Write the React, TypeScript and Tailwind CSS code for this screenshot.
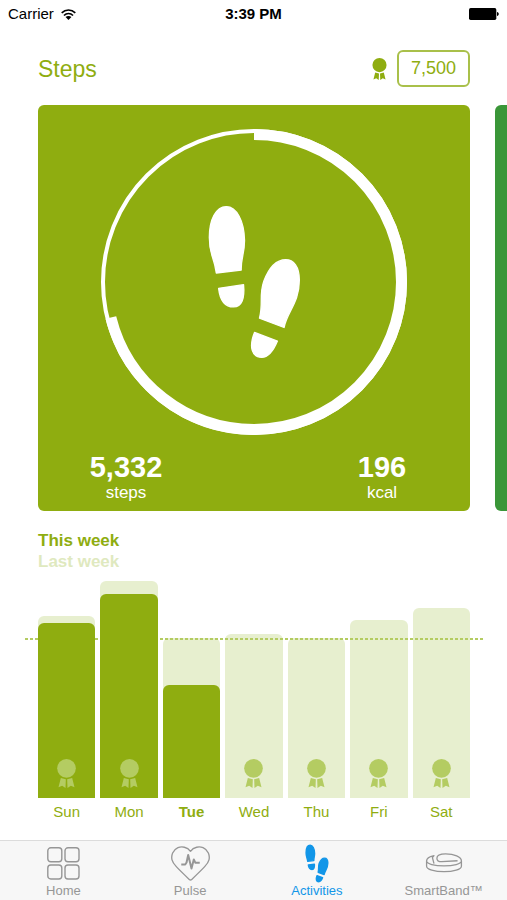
import React from "react";

type IconProps = { className?: string };

function Footprints({ className, weight = 4 }: IconProps & { weight?: number }) {
  return (
    <svg viewBox="38 31 280 462" className={className} fill="currentColor" stroke="currentColor" strokeWidth={weight} strokeLinejoin="round" overflow="visible" aria-hidden="true">
      <path d="M63 235 L138 226 C137 188 148 178 148 137 C147 78 124 35 93 35 C62 35 42 74 42 128 C42 184 55 178 63 235Z" />
      <path d="M70 281 L145 270 C149 312 140 337 115 337 C88 337 74 316 70 281Z" />
      <path d="M193 371 L267 399 C276 351 313 326 313 256 C313 216 296 195 272 195 C240 195 218 228 206 260 C191 304 205 324 193 371Z" />
      <path d="M178 414 L247 440 C233 474 219 489 200 489 C169 489 161 456 178 414Z" />
    </svg>
  );
}

function Medal({ className }: IconProps) {
  return (
    <svg viewBox="0 0 56 87" className={className} fill="currentColor" aria-hidden="true">
      <circle cx="28" cy="28" r="28" />
      <path d="M11 57 L26 61 L25 87 L15 80 L4 85Z" />
      <path d="M45 57 L30 61 L31 87 L41 80 L52 85Z" />
    </svg>
  );
}

function Wifi({ className }: IconProps) {
  return (
    <svg viewBox="0 0 46 34" className={className} fill="none" stroke="currentColor" strokeWidth="5" aria-hidden="true">
      <path d="M2 12 C14 0 32 0 44 12" />
      <path d="M9 20 C17 12 29 12 37 20" />
      <path d="M14 25 C19 20 27 20 32 25 L23 34Z" fill="currentColor" stroke="none" />
    </svg>
  );
}

function Battery({ className }: IconProps) {
  return (
    <svg viewBox="0 0 90 36" className={className} fill="currentColor" aria-hidden="true">
      <rect x="0" y="0" width="82" height="36" rx="5" />
      <path d="M84 12 C91 13 91 23 84 24Z" />
    </svg>
  );
}

function HomeIcon() {
  return (
    <svg viewBox="0 0 33 33" className="size-[33px]" fill="none" stroke="currentColor" strokeWidth="1.4" aria-hidden="true">
      <rect x="0.8" y="0.8" width="14" height="14" rx="3" />
      <rect x="18" y="0.8" width="14" height="14" rx="3" />
      <rect x="0.8" y="18" width="14" height="14" rx="3" />
      <rect x="18" y="18" width="14" height="14" rx="3" />
    </svg>
  );
}

function PulseIcon() {
  return (
    <svg viewBox="0 0 118 106" className="h-[35px] w-[39px]" fill="none" stroke="currentColor" strokeWidth="4" strokeLinejoin="round" aria-hidden="true">
      <path d="M59 16 C49 2 32 1 21 5 C5 12 0 29 3 42 C6 54 17 65 56 102 Q59 104 62 102 C101 65 112 54 115 42 C118 29 113 12 97 5 C86 1 69 2 59 16Z" />
      <path d="M31 56 H43 L47 50 L52 27 L62 68 L69 41 L74 51 H87" strokeWidth="6" />
    </svg>
  );
}

function BandIcon() {
  return (
    <svg viewBox="0 0 114 62" className="h-[20px] w-[38px]" fill="none" stroke="currentColor" strokeWidth="4" strokeLinejoin="round" aria-hidden="true">
      <path d="M3 25 C3 34 28 40 57 40 C86 40 111 34 111 25 V41 C111 51 86 58 57 58 C28 58 3 51 3 41Z" />
      <path d="M3 25 C3 17 11 11 26 8 L21 14 L26 33" />
      <path d="M111 25 C111 11 88 3 62 3 C44 3 35 8 35 16 C35 23 41 27 50 27 L99 24" />
    </svg>
  );
}

const GOAL = 7500;
const STEPS = 5332;

function ProgressRing() {
  const radius = 147.5;
  const length = 2 * Math.PI * radius;
  return (
    <div className="relative mx-auto size-[306px]">
      <svg viewBox="0 0 306 306" className="size-full -rotate-90" fill="none" stroke="white" role="img" aria-label="Progress towards goal">
        <circle cx="153" cy="153" r="151" strokeWidth="4" />
        <circle cx="153" cy="153" r={radius} strokeWidth="11" strokeDasharray={`${(length * STEPS) / GOAL} ${length}`} />
      </svg>
      <div className="absolute inset-0 flex items-center justify-center text-white">
        <Footprints className="h-[154px] w-[93px]" />
      </div>
    </div>
  );
}

function Stat({ value, unit }: { value: string; unit: string }) {
  return (
    <div className="w-44 text-center text-white">
      <p className="text-[29px] leading-8 font-bold">{value}</p>
      <p className="text-[17px] leading-5">{unit}</p>
    </div>
  );
}

type Day = { name: string; last: number; current?: number; medal: boolean; today?: boolean };

const week: Day[] = [
  { name: "Sun", last: 182, current: 175, medal: true },
  { name: "Mon", last: 217, current: 204, medal: true },
  { name: "Tue", last: 160, current: 113, medal: false, today: true },
  { name: "Wed", last: 164, medal: true },
  { name: "Thu", last: 160, medal: true },
  { name: "Fri", last: 178, medal: true },
  { name: "Sat", last: 190, medal: true },
];

function WeekChart() {
  return (
    <div className="mt-[9px]">
      <div className="relative isolate grid h-[217px] grid-cols-7 gap-[5px]">
        {week.map((day) => (
          <div key={day.name} className="grid items-end">
            <div className="col-start-1 row-start-1 rounded-t-[6px] bg-[#e7efcf]" style={{ height: day.last }} />
            {day.current !== undefined && (
              <div className="z-20 col-start-1 row-start-1 rounded-t-[6px] bg-[#8fad10]" style={{ height: day.current }} />
            )}
            {day.medal && (
              <Medal className="z-30 col-start-1 row-start-1 mb-[10px] h-[29px] w-[19px] justify-self-center text-[#b4cc62]" />
            )}
          </div>
        ))}
        <div className="absolute -inset-x-[13px] bottom-[158px] z-10 h-[2px] bg-[repeating-linear-gradient(90deg,#b4cc62_0_3px,transparent_3px_5px)]" />
      </div>
      <div className="mt-1 grid grid-cols-7 gap-[5px] text-center text-[15px] leading-5">
        {week.map((day) => (
          <span key={day.name} className={day.today ? "font-bold" : ""}>
            {day.name}
          </span>
        ))}
      </div>
    </div>
  );
}

const tabs = [
  { label: "Home", icon: <HomeIcon />, active: false },
  { label: "Pulse", icon: <PulseIcon />, active: false },
  { label: "Activities", icon: <Footprints className="h-[37px] w-[24px]" weight={18} />, active: true },
  { label: "SmartBand™", icon: <BandIcon />, active: false },
];

export default function App() {
  return (
    <div className="flex min-h-screen flex-col overflow-hidden bg-white font-['Liberation_Sans',Arial,sans-serif] text-[#8fad10]">
      <div className="grid h-7 grid-cols-3 items-center px-2 text-[15px] text-black">
        <div className="flex items-center gap-[7px]">
          <span>Carrier</span>
          <Wifi className="h-[11px] w-[15px]" />
        </div>
        <span className="text-center font-bold">3:39 PM</span>
        <Battery className="h-3 w-[30px] justify-self-end" />
      </div>

      <main>
        <header className="mt-[22px] flex items-center justify-between pr-[37px] pl-[38px]">
          <h1 className="text-[23px] leading-7">Steps</h1>
          <div className="flex items-center gap-[10px]">
            <Medal className="h-[22px] w-[15px]" />
            <button type="button" className="h-[37px] rounded-[6px] border-2 border-[#a9c04a] px-3 text-[18px]">
              7,500
            </button>
          </div>
        </header>

        <section className="mt-[18px] flex gap-[25px] overflow-hidden pl-[38px]">
          <article className="w-[calc(100%-37px)] shrink-0 rounded-[6px] bg-[#8fad10] pt-6 pb-2">
            <ProgressRing />
            <div className="mt-4 flex justify-between">
              <Stat value="5,332" unit="steps" />
              <Stat value="196" unit="kcal" />
            </div>
          </article>
          <article className="w-[calc(100%-37px)] shrink-0 rounded-[6px] bg-[#3a9638]" />
        </section>

        <section className="mt-[19px] pr-[37px] pl-[38px]">
          <div className="text-[17px] leading-[21px] font-bold">
            <p>This week</p>
            <p className="text-[#dfe9bf]">Last week</p>
          </div>
          <WeekChart />
        </section>
      </main>

      <nav className="mt-auto grid grid-cols-4 border-t border-[#dcdcdc] bg-[#f7f7f7] pb-[3px]">
        {tabs.map((tab) => (
          <a
            key={tab.label}
            href="#"
            aria-current={tab.active ? "page" : undefined}
            className={tab.active ? "flex flex-col items-center text-[#1296e8]" : "flex flex-col items-center text-[#969696]"}
          >
            <span className="flex h-11 items-center">{tab.icon}</span>
            <span className="text-[13px] leading-3">{tab.label}</span>
          </a>
        ))}
      </nav>
    </div>
  );
}
